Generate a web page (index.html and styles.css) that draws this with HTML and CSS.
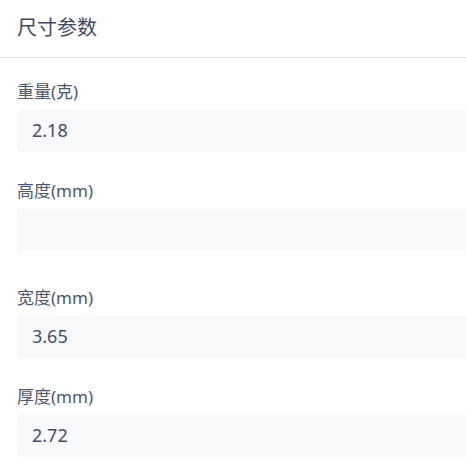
FILE: index.html
```html
<!DOCTYPE html>
<html lang="zh">
<head>
<meta charset="utf-8">
<link rel="stylesheet" href="styles.css">
</head>
<body>
<div class="panel">
  <div class="header">尺寸参数</div>
  <div class="form">
    <div class="field">
      <div class="label">重量(克)</div>
      <div class="input">2.18</div>
    </div>
    <div class="field field-tall">
      <div class="label">高度(mm)</div>
      <div class="input"></div>
    </div>
    <div class="field">
      <div class="label">宽度(mm)</div>
      <div class="input">3.65</div>
    </div>
    <div class="field">
      <div class="label">厚度(mm)</div>
      <div class="input">2.72</div>
    </div>
  </div>
</div>
</body>
</html>
```
FILE: styles.css
```css
html, body {
  margin: 0;
  padding: 0;
  background: #ffffff;
  overflow: hidden;
}
.panel {
  width: 466px;
  overflow: hidden;
  font-family: "Noto Sans", "Noto Sans CJK SC", sans-serif;
}
.header {
  height: 57px;
  line-height: 56px;
  padding-left: 17px;
  font-size: 20px;
  color: #3e4a64;
  border-bottom: 1px solid #e6e8eb;
}
.form {
  padding: 22px 0 0 17px;
  display: flex;
  flex-direction: column;
  gap: 27px;
}
.field {
  display: flex;
  flex-direction: column;
  gap: 6px;
}
.field-tall {
  margin-bottom: 8px;
}
.label {
  font-size: 17px;
  line-height: 24px;
  color: #4a5771;
}
.input {
  width: 460px;
  height: 42px;
  line-height: 40px;
  box-sizing: border-box;
  padding-left: 15px;
  background: #f7f9fb;
  border-radius: 4px 0 0 4px;
  font-size: 18px;
  color: #424e68;
}
```
